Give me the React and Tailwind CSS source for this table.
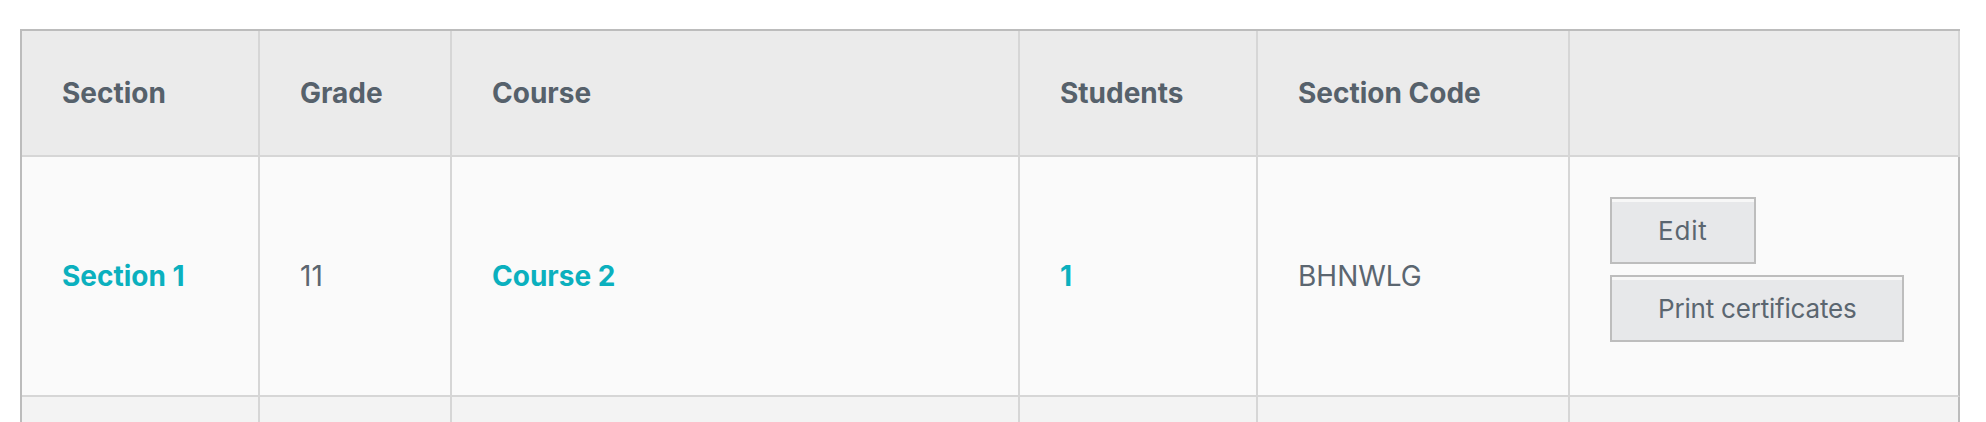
const rows = [
  { section: 'Section 1', grade: '11', course: 'Course 2', students: '1', code: 'BHNWLG' },
]

const cols = ['Section', 'Grade', 'Course', 'Students', 'Section Code', '']

function Cell({ children, last, className = '' }) {
  return (
    <div
      className={`flex items-center px-10 border-b-2 ${last ? 'border-r-2 border-r-[#bcbcbc]' : 'border-r-2 border-r-[#d6d6d6]'} border-b-[#d6d6d6] ${className}`}
    >
      {children}
    </div>
  )
}

function Button({ children, className = '' }) {
  return (
    <button className={`h-[67px] px-[46px] border-2 border-[#bdbdbd] bg-[#e7e8ea] shadow-[inset_0_3px_0_#f7f7f7] text-[26px] leading-none text-[#5b6670] ${className}`}>
      {children}
    </button>
  )
}

export default function App() {
  return (
    <div className="h-[422px] overflow-hidden bg-white pt-[29px] pl-5 font-['Inter',sans-serif]">
      <div className="w-[1940px] border-l-2 border-t-2 border-[#bcbcbc] grid grid-cols-[238px_192px_568px_238px_312px_390px]">
        {cols.map((c) => (
          <div
            key={c || 'actions'}
            className="flex items-center px-10 h-[126px] bg-[#ebebeb] border-r-2 border-b-2 border-[#d6d6d6] text-[28px] font-bold text-[#56616b]"
          >
            {c}
          </div>
        ))}

        {rows.map((r) => (
          <div key={r.section} className="contents">
            <Cell className="bg-[#fafafa] text-[28px] font-bold text-[#0bb0be]">
              <a href="#">{r.section}</a>
            </Cell>
            <Cell className="bg-[#fafafa] text-[28px] text-[#5b6670]">{r.grade}</Cell>
            <Cell className="bg-[#fafafa] text-[28px] font-bold text-[#0bb0be]">
              <a href="#">{r.course}</a>
            </Cell>
            <Cell className="bg-[#fafafa] text-[28px] font-bold text-[#0bb0be]">
              <a href="#">{r.students}</a>
            </Cell>
            <Cell className="bg-[#fafafa] text-[28px] text-[#5b6670]">{r.code}</Cell>
            <div className="bg-[#fafafa] border-r-2 border-r-[#bcbcbc] border-b-2 border-b-[#d6d6d6] px-10 pt-10 pb-[53px] flex flex-col items-start gap-[11px]">
              <Button className="tracking-[0.8px]">Edit</Button>
              <Button className="tracking-[-0.2px]">Print certificates</Button>
            </div>
          </div>
        ))}

        {cols.map((c, i) => (
          <div
            key={'next-' + i}
            className={`h-[240px] bg-[#f3f3f3] border-r-2 border-b-2 ${i === 5 ? 'border-r-[#bcbcbc]' : 'border-r-[#d6d6d6]'} border-b-[#d6d6d6]`}
          />
        ))}
      </div>
    </div>
  )
}
